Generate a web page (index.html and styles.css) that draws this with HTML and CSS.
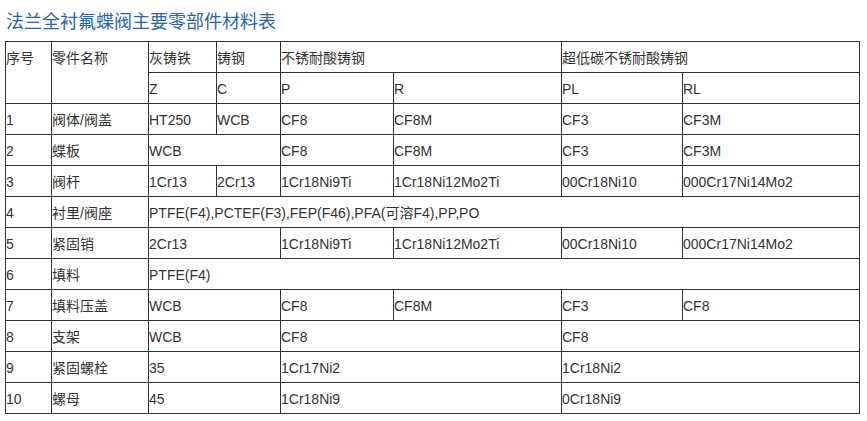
FILE: index.html
```html
<!DOCTYPE html>
<html lang="zh-CN">
<head>
<meta charset="utf-8">
<title>法兰全衬氟蝶阀主要零部件材料表</title>
<link rel="stylesheet" href="styles.css">
</head>
<body>
<h1 class="title">法兰全衬氟蝶阀主要零部件材料表</h1>
<div class="grid">
  <div class="c r2">序号</div>
  <div class="c r2">零件名称</div>
  <div class="c">灰铸铁</div>
  <div class="c">铸钢</div>
  <div class="c s2">不锈耐酸铸钢</div>
  <div class="c s2">超低碳不锈耐酸铸钢</div>
  <div class="c">Z</div>
  <div class="c">C</div>
  <div class="c">P</div>
  <div class="c">R</div>
  <div class="c">PL</div>
  <div class="c">RL</div>

  <div class="c">1</div><div class="c">阀体/阀盖</div><div class="c">HT250</div><div class="c">WCB</div><div class="c">CF8</div><div class="c">CF8M</div><div class="c">CF3</div><div class="c">CF3M</div>

  <div class="c">2</div><div class="c">蝶板</div><div class="c s2">WCB</div><div class="c">CF8</div><div class="c">CF8M</div><div class="c">CF3</div><div class="c">CF3M</div>

  <div class="c">3</div><div class="c">阀杆</div><div class="c">1Cr13</div><div class="c">2Cr13</div><div class="c">1Cr18Ni9Ti</div><div class="c">1Cr18Ni12Mo2Ti</div><div class="c">00Cr18Ni10</div><div class="c">000Cr17Ni14Mo2</div>

  <div class="c">4</div><div class="c">衬里/阀座</div><div class="c s6">PTFE(F4),PCTEF(F3),FEP(F46),PFA(可溶F4),PP,PO</div>

  <div class="c">5</div><div class="c">紧固销</div><div class="c s2">2Cr13</div><div class="c">1Cr18Ni9Ti</div><div class="c">1Cr18Ni12Mo2Ti</div><div class="c">00Cr18Ni10</div><div class="c">000Cr17Ni14Mo2</div>

  <div class="c">6</div><div class="c">填料</div><div class="c s6">PTFE(F4)</div>

  <div class="c">7</div><div class="c">填料压盖</div><div class="c s2">WCB</div><div class="c">CF8</div><div class="c">CF8M</div><div class="c">CF3</div><div class="c">CF8</div>

  <div class="c">8</div><div class="c">支架</div><div class="c s2">WCB</div><div class="c s2">CF8</div><div class="c s2">CF8</div>

  <div class="c">9</div><div class="c">紧固螺栓</div><div class="c s2">35</div><div class="c s2">1Cr17Ni2</div><div class="c s2">1Cr18Ni2</div>

  <div class="c">10</div><div class="c">螺母</div><div class="c s2">45</div><div class="c s2">1Cr18Ni9</div><div class="c s2">0Cr18Ni9</div>
</div>
</body>
</html>
```

FILE: styles.css
```css
html, body {
  margin: 0;
  padding: 0;
  background: #ffffff;
}

body {
  padding: 0 5px;
  font-family: "Liberation Sans", Arial, "Noto Sans CJK SC", sans-serif;
  color: #333333;
}

.title {
  margin: 0;
  padding: 9px 0 0 1px;
  height: 32px;
  font-size: 18px;
  line-height: 22px;
  font-weight: normal;
  color: #2a67ad;
  font-family: "Noto Sans CJK SC", "Liberation Sans", sans-serif;
}

.grid {
  display: grid;
  grid-template-columns: 46px 97px 68px 64px 113px 168px 121px 177px;
  grid-auto-rows: 31px;
  width: 854px;
  border-top: 1px solid #333333;
  border-left: 1px solid #333333;
}

.c {
  border-right: 1px solid #333333;
  border-bottom: 1px solid #333333;
  font-size: 14px;
  line-height: 30px;
  padding-top: 1px;
  white-space: nowrap;
  overflow: hidden;
}

.r2 { grid-row: span 2; }
.s2 { grid-column: span 2; }
.s6 { grid-column: span 6; }
```
